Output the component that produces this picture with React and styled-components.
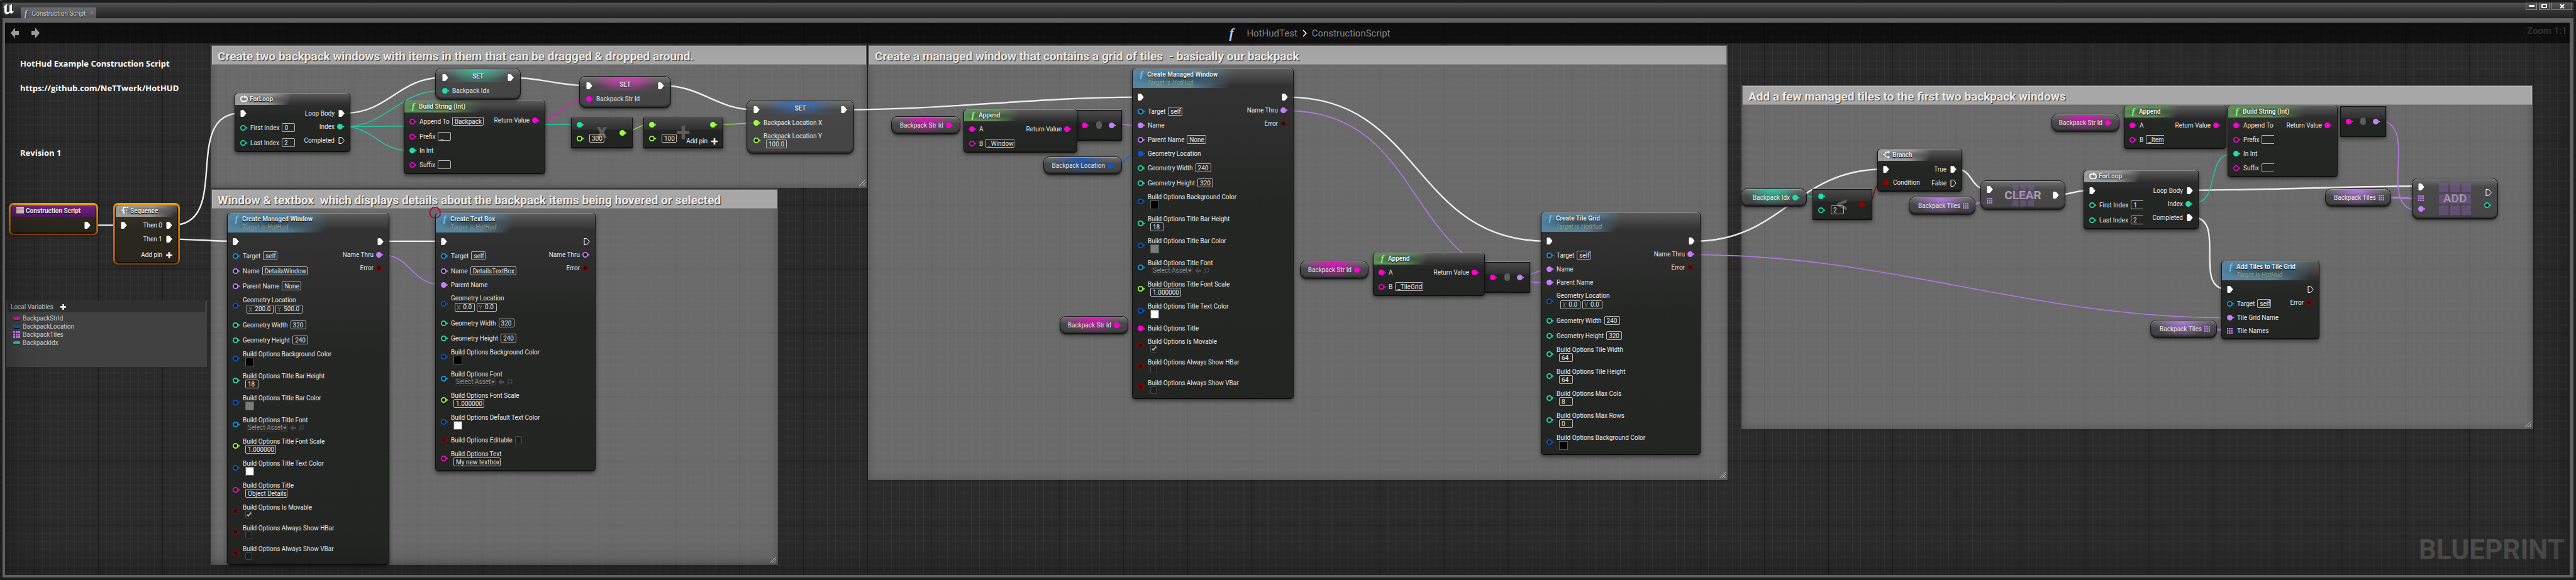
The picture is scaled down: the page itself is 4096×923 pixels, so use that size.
import React, { useId } from "react";
import styled, { createGlobalStyle, css } from "styled-components";

const ZOOM = 0.796;
const PAN = { x: 10, y: 46 };

const C = {
  exec: "#ffffff",
  int: "#22ddac",
  str: "#ff00d4",
  name: "#c67ffb",
  float: "#9bff45",
  struct: "#0757cc",
  obj: "#0aa0e8",
  bool: "#8f0000",
};

const GlobalStyle = createGlobalStyle`
  *, *::before, *::after { box-sizing: border-box; }
  body { margin: 0; background: #1c1d1c; color: #e6e6e6; font: 10px/11px Roboto, sans-serif; }
  input, select, button { font: inherit; color: inherit; margin: 0; }
  h1, h2, h3, p, ul { margin: 0; padding: 0; font: inherit; }
`;

/* ---------- window chrome ---------- */

const Window = styled.div`
  min-height: 100vh;
  display: flex;
  flex-direction: column;
  padding: 0 4px 4px;
  background: linear-gradient(#4a4d4b 0 1px, #1c1e1d 1px);
`;

const TitleBar = styled.header`
  height: 29px;
  padding-top: 4px;
  display: flex;
  align-items: flex-start;
  justify-content: space-between;
  background: linear-gradient(#1c1e1d 0 4px, #525252 5px, #3a3a3a 14px, #222 29px);
`;

const TitleLeft = styled.div`
  display: flex;
  align-items: flex-end;
  height: 25px;
  gap: 10px;
`;

const Logo = styled.svg`
  width: 18px;
  height: 17px;
  margin: 0 0 6px 1px;
`;

const Tab = styled.div`
  display: flex;
  align-items: center;
  gap: 7px;
  width: 120px;
  height: 17px;
  padding-left: 6px;
  border-top: 1px solid #a08a2c;
  border-radius: 2px 2px 0 0;
  background: linear-gradient(#6b6b6b, #565656);
  color: #d2d2d2;
  text-shadow: 1px 1px 0 #222;
  white-space: nowrap;
`;

const TabClose = styled.button`
  border: 0;
  padding: 0;
  background: none;
  color: #8c8c8c;
  line-height: 10px;
`;

const Controls = styled.div`
  display: flex;
  gap: 3px;
  padding-right: 2px;
`;

const ControlButton = styled.button`
  display: flex;
  align-items: center;
  justify-content: center;
  width: ${(p) => p.$w}px;
  height: 12px;
  padding: 0;
  border: 1px solid #8e8e8e;
  border-top: 0;
  background: linear-gradient(#5c5c5c, #3c3c3c);
`;

const Frame = styled.main`
  flex: 1;
  display: flex;
  padding: 7px 6px 4px 4px;
  background: #616161;
`;

const Canvas = styled.div`
  position: relative;
  flex: 1;
  min-height: 870px;
  overflow: hidden;
  background: #2a2a2a;
`;

const Layer = styled.svg`
  position: absolute;
  inset: 0;
  width: 100%;
  height: 100%;
  pointer-events: none;
`;

const Vignette = styled.div`
  position: absolute;
  inset: 0;
  box-shadow: inset 0 0 60px rgba(0, 0, 0, 0.4);
  pointer-events: none;
`;

const Toolbar = styled.nav`
  position: relative;
  display: flex;
  align-items: center;
  justify-content: space-between;
  height: 33px;
  padding: 0 4px 0 9px;
  background: rgba(0, 0, 0, 0.6);
`;

const NavButtons = styled.div`
  display: flex;
  gap: 20px;
`;

const NavButton = styled.button`
  display: flex;
  padding: 0;
  border: 0;
  background: none;
  color: #9a9a9a;
`;

const Breadcrumb = styled.div`
  display: flex;
  align-items: center;
  gap: 8px;
  margin-left: 84px;
  font-size: 15px;
  line-height: 18px;
  color: #868686;
`;

const Crumb = styled.a`
  color: inherit;
  text-decoration: none;
`;

const CrumbIcon = styled.span`
  display: flex;
  width: 20px;
`;

const ZoomLevel = styled.span`
  align-self: flex-start;
  padding-top: 4px;
  font-size: 15px;
  line-height: 18px;
  font-weight: 700;
  color: #303030;
`;

const Watermark = styled.div`
  position: absolute;
  right: 8px;
  bottom: 16px;
  font-size: 44px;
  line-height: 48px;
  font-weight: 700;
  color: rgba(255, 255, 255, 0.17);
`;

/* ---------- canvas items ---------- */

const placed = css`
  position: absolute;
  left: ${(p) => Math.round((p.$x - PAN.x) * ZOOM)}px;
  top: ${(p) => Math.round((p.$y - PAN.y) * ZOOM)}px;
`;

const Note = styled.p`
  ${placed}
  font: 700 13px/16px "Open Sans", sans-serif;
  color: #fff;
  white-space: nowrap;
`;

const CommentBox = styled.section`
  ${placed}
  width: ${(p) => Math.round(p.$w * ZOOM)}px;
  height: ${(p) => Math.round(p.$h * ZOOM)}px;
  padding: 2px;
  background: rgba(184, 184, 184, 0.45);
  box-shadow: inset 0 0 14px rgba(0, 0, 0, 0.28), 0 0 3px rgba(0, 0, 0, 0.4);
`;

const CommentTitle = styled.h2`
  height: 30px;
  padding: 4px 8px 0;
  overflow: hidden;
  border: 1px solid #b4b4b4;
  border-bottom-color: #8a8a8a;
  background: #a7a7a7;
  color: #ececec;
  font-size: 19px;
  line-height: 23px;
  font-weight: 700;
  white-space: pre;
  text-shadow: 1px 1px 1px #2a2a2a;
`;

const Grip = styled.svg`
  position: absolute;
  right: 3px;
  bottom: 3px;
  width: 10px;
  height: 10px;
`;

const nodeFrame = css`
  border-radius: 5px;
  background: linear-gradient(rgba(48, 48, 48, 0.93), rgba(32, 34, 32, 0.94) 40%, rgba(31, 33, 31, 0.95));
  box-shadow: 0 0 0 1px #111 inset, 0 1px 1px #0a0a0a, 0 4px 6px rgba(0, 0, 0, 0.5);
`;

const NodeBox = styled.article`
  ${(p) => (p.$x === undefined ? "position: relative;" : placed)}
  ${nodeFrame}
  width: ${(p) => p.$w}px;
`;

const Selected = styled.div`
  ${placed}
  padding: 3px;
  border-radius: 8px;
  background: linear-gradient(#f3a70c, #d46a04);
`;

const NodeHeader = styled.header`
  height: ${(p) => (p.$tall ? 31 : 19)}px;
  margin: 0 1px;
  border-radius: 5px 5px 0 0;
  border-top: 1px solid #8c8c8c;
  background: linear-gradient(#5a5a5a, #303030 90%);
  display: flex;
  overflow: hidden;
`;

const HeaderSpill = styled.div`
  display: flex;
  align-items: flex-start;
  gap: 3px;
  height: 100%;
  padding: 2px 34px 0 8px;
  background:
    radial-gradient(ellipse at 45% 50%, rgba(20, 24, 28, 0.55), transparent 60%),
    linear-gradient(105deg, ${(p) => p.$tint} 55%, transparent 92%);
  ${(p) => p.$full && `flex: 1; background: linear-gradient(rgba(0,0,0,.05), rgba(0,0,0,.35)), ${p.$tint};`}
`;

const HeaderIcon = styled.span`
  display: flex;
  justify-content: center;
  width: 12px;
  color: #fff;
`;

const Fx = styled.i`
  font: italic 700 ${(p) => p.$size || 14}px/13px "Liberation Serif", serif;
  color: ${(p) => p.$color};
`;

const NodeTitle = styled.h3`
  font-size: 10px;
  line-height: 13px;
  font-weight: 700;
  color: #ececec;
  white-space: nowrap;
  text-shadow: 0 1px 1px #000;
`;

const NodeSubtitle = styled.p`
  font-style: italic;
  line-height: 13px;
  color: #8f9a78;
`;

const NodeBody = styled.div`
  display: flex;
  justify-content: space-between;
  padding: ${(p) => p.$top}px ${(p) => p.$side || 9}px 7px;
`;

const PinColumn = styled.div`
  display: flex;
  flex-direction: column;
  gap: 10px;
  align-items: ${(p) => (p.$right ? "flex-end" : "flex-start")};
`;

const PinRow = styled.div`
  display: flex;
  align-items: center;
  gap: 4px;
  min-height: ${(p) => (p.$exec ? 12 : 11)}px;
  flex-direction: ${(p) => (p.$right ? "row-reverse" : "row")};
  white-space: nowrap;
`;

const PinSlot = styled.span`
  display: flex;
  width: 12px;
  justify-content: ${(p) => (p.$right ? "flex-end" : "flex-start")};
`;

const PinContent = styled.div`
  display: flex;
  gap: ${(p) => (p.$stack ? 0 : 4)}px;
  flex-direction: ${(p) => (p.$stack ? "column" : "row")};
  align-items: ${(p) => (p.$stack ? "flex-start" : "center")};
`;

const FieldSlot = styled.div`
  display: flex;
  gap: 3px;
  padding-left: ${(p) => (p.$stack ? 4 : 0)}px;
`;

const TextField = styled.input`
  width: ${(p) => p.$w}px;
  height: 14px;
  padding: 0 0 0 3px;
  border: 1px solid #b8b8b8;
  ${(p) => p.$cut && "border-right: 0;"}
  border-radius: ${(p) => (p.$cut ? "2px 0 0 2px" : "2px")};
  background: transparent;
  color: #e6e6e6;
  line-height: 12px;
`;

const VectorSlot = styled.div`
  display: flex;
  gap: 3px;
  padding: 2px 0 1px 6px;
`;

const VectorField = styled.label`
  display: flex;
  align-items: center;
  width: ${(p) => p.$w}px;
  height: 14px;
  padding-left: 2px;
  gap: 4px;
  border: 1px solid #b8b8b8;
  border-radius: 2px;
  color: #777;
`;

const VectorInput = styled.input`
  flex: 1;
  min-width: 0;
  width: 10px;
  padding: 0;
  border: 0;
  background: none;
  color: #e6e6e6;
  line-height: 12px;
`;

const Swatch = styled.button`
  width: 14px;
  height: 14px;
  padding: 0;
  border: 1px solid #5c5c5c;
  background: ${(p) => p.$color};
`;

const AssetSlot = styled.div`
  padding-left: 6px;
`;

const AssetWrap = styled.div`
  position: relative;
  display: flex;
  align-items: center;
  gap: 3px;
  height: 13px;
  color: #4a4a4a;
`;

const AssetSelect = styled.select`
  appearance: none;
  width: 66px;
  height: 13px;
  padding: 0 2px;
  border: 0;
  border-radius: 2px;
  background: #2f302f;
  color: #939393;
  line-height: 12px;
  text-shadow: 0 1px 1px #000;
`;

const Caret = styled.svg`
  position: absolute;
  left: 58px;
  top: 5px;
  width: 6px;
  height: 4px;
`;

const Check = styled.input`
  appearance: none;
  position: relative;
  width: 11px;
  height: ${(p) => (p.$tall ? 13 : 12)}px;
  border: 1px solid #4b4b4b;
  border-radius: 2px;
  background: #1d1f1d;
  &:checked::after {
    content: "";
    position: absolute;
    left: 3px;
    top: 0;
    width: 4px;
    height: 8px;
    border: solid #b5b5b5;
    border-width: 0 2px 2px 0;
    transform: rotate(40deg);
  }
`;

const AddPinButton = styled.button`
  display: flex;
  align-items: center;
  gap: 6px;
  height: 11px;
  margin-top: ${(p) => p.$push}px;
  padding: 0;
  border: 0;
  background: none;
  color: #f0f0f0;
  line-height: 11px;
  white-space: nowrap;
`;

/* ---------- rounded nodes ---------- */

const glassFrame = css`
  border-radius: 9px;
  border-top: 1px solid #9c9c9c;
  box-shadow: 0 0 0 1px #151515, 0 2px 2px #101010, 0 4px 6px rgba(0, 0, 0, 0.5),
    inset 0 -2px 2px rgba(0, 0, 0, 0.35);
`;

const SetBox = styled.article`
  ${placed}
  ${glassFrame}
  width: ${(p) => p.$w}px;
  background:
    radial-gradient(ellipse 50px 22px at 50% 0, ${(p) => p.$tint}, transparent),
    linear-gradient(90deg, transparent 10%, ${(p) => p.$tint}33 35%, ${(p) => p.$tint}33 65%, transparent 90%) 0 0 / 100% 21px no-repeat,
    linear-gradient(rgba(115, 115, 115, 0.85), rgba(68, 68, 68, 0.92) 14px, rgba(66, 66, 66, 0.92) 60%);
`;

const SetHead = styled.header`
  display: flex;
  align-items: flex-start;
  justify-content: space-between;
  height: 27px;
  padding: 5px 10px 0;
  > svg { margin-top: 3px; }
`;

const Pill = styled.article`
  ${placed}
  ${glassFrame}
  display: flex;
  align-items: center;
  justify-content: flex-end;
  gap: 4px;
  width: ${(p) => p.$w}px;
  height: 26px;
  padding-right: 10px;
  background:
    radial-gradient(ellipse 45px 26px at 48% 0, ${(p) => p.$tint}cc, transparent),
    linear-gradient(rgba(110, 110, 110, 0.9), rgba(70, 70, 70, 0.92) 40%, rgba(60, 60, 60, 0.92));
  white-space: nowrap;
`;

const ArrayFnBox = styled.article`
  ${placed}
  ${glassFrame}
  display: flex;
  justify-content: space-between;
  width: ${(p) => p.$w}px;
  height: ${(p) => p.$h}px;
  padding: 0 9px;
  background: linear-gradient(rgba(110, 110, 110, 0.9), rgba(72, 72, 72, 0.92) 12px, rgba(66, 66, 66, 0.92));
`;

const ArrayFnPins = styled.div`
  display: flex;
  flex-direction: column;
  gap: ${(p) => (p.$right ? 10 : 8)}px;
  justify-content: ${(p) => (p.$right ? "center" : "flex-start")};
  align-items: ${(p) => (p.$right ? "flex-end" : "flex-start")};
  padding-top: ${(p) => (p.$right ? 0 : 7)}px;
`;

const ArrayFnLabel = styled.div`
  position: absolute;
  inset: 0;
  display: grid;
  place-items: center;
  color: #a9a3ae;
  font-size: 19px;
  line-height: 22px;
  font-weight: 700;
  > * { grid-area: 1 / 1; }
`;

const MathBox = styled.article`
  ${placed}
  ${nodeFrame}
  display: flex;
  justify-content: space-between;
  border-radius: 1px;
  border-top: 1px solid #8a8a8a;
  width: ${(p) => p.$w}px;
  height: 49px;
  padding: 0 9px;
  background: linear-gradient(rgba(72, 72, 72, 0.95), rgba(44, 44, 44, 0.95) 19px, rgba(32, 34, 32, 0.96) 20px);
`;

const MathGlyph = styled.span`
  position: absolute;
  inset: 0;
  display: grid;
  place-items: center;
  padding-bottom: ${(p) => (p.$raised ? 6 : 0)}px;
  color: #5c5d5c;
  font-size: ${(p) => p.$size}px;
  line-height: 40px;
  font-weight: 700;
`;

const MathPins = styled.div`
  position: relative;
  display: flex;
  flex-direction: column;
  gap: 9px;
  padding-top: ${(p) => (p.$mid ? 0 : 6)}px;
  justify-content: ${(p) => (p.$mid ? "center" : "flex-start")};
  align-items: ${(p) => (p.$right ? "flex-end" : "flex-start")};
`;

const MathRow = styled.div`
  display: flex;
  align-items: center;
  gap: 8px;
  min-height: 11px;
`;

const ConvertBox = styled(MathBox)`
  align-items: center;
`;

const Dot = styled.span`
  width: 9px;
  height: 12px;
  border-radius: 5px;
  background: #5b5c5b;
`;

/* ---------- local variables ---------- */

const Variables = styled.aside`
  ${placed}
  width: 319px;
  height: 105px;
  padding: 0 3px 0 2px;
  background: #414141;
`;

const VariablesHead = styled.div`
  display: flex;
  align-items: center;
  gap: 11px;
  height: 18px;
  padding-left: 5px;
  margin-bottom: 3px;
  background: #303030;
  color: #c4c4c4;
`;

const VariableItem = styled.li`
  display: flex;
  align-items: center;
  gap: 4px;
  height: 13px;
  padding-left: 9px;
  list-style: none;
  color: #c8c8c8;
`;

const Bar = styled.span`
  width: 11px;
  height: 5px;
  border-radius: 2px;
  background: ${(p) => p.$color};
  box-shadow: 0 1px 0 #111;
`;

const IconButton = styled.button`
  display: flex;
  padding: 0;
  border: 0;
  background: none;
  color: #fff;
`;

/* ---------- glyphs ---------- */

const Exec = ({ open }) => (
  <svg width="10" height="11" viewBox="0 0 10 11" aria-hidden="true">
    <path d="M1 .5H4.6Q5.2 .5 5.6 1L9.2 5.5L5.6 10Q5.2 10.5 4.6 10.5H1Z" fill={open ? "none" : "#fff"} stroke="#fff" strokeWidth="1" />
  </svg>
);

const Data = ({ color, filled }) => (
  <svg width="12" height="9" viewBox="0 0 12 9" aria-hidden="true">
    <circle cx="4.5" cy="4.5" r="3.6" fill={filled ? color : "#141614"} stroke={color} strokeWidth="1.7" />
    <path d="M9.2 2.4L11.6 4.5L9.2 6.6Z" fill={color} />
  </svg>
);

const ArrayIcon = ({ size = 9, color = C.name, opacity = 1, gap = 1 }) => {
  const cell = (size - gap * 2) / 3;
  return (
    <svg width={size} height={size} opacity={opacity} aria-hidden="true">
      {[0, 1, 2].map((r) =>
        [0, 1, 2].map((c) => (
          <rect key={`${r}${c}`} x={c * (cell + gap)} y={r * (cell + gap)} width={cell} height={cell} fill={color} />
        ))
      )}
    </svg>
  );
};

const Plus = ({ size = 9 }) => (
  <svg width={size} height={size} viewBox="0 0 9 9" aria-hidden="true">
    <path d="M3.3 0H5.7V3.3H9V5.7H5.7V9H3.3V5.7H0V3.3H3.3Z" fill="currentColor" />
  </svg>
);

const ArrowGlyph = ({ flip, w = 13, h = 17 }) => (
  <svg width={w} height={h} viewBox="0 0 13 17" aria-hidden="true" preserveAspectRatio="none">
    <path d={flip ? "M13 8.5L6 0V5H0V12H6V17Z" : "M0 8.5L7 0V5H13V12H7V17Z"} fill="currentColor" />
  </svg>
);

const LoopIcon = () => (
  <svg width="12" height="12" viewBox="0 0 12 12" fill="none" stroke="#fff" strokeWidth="1.8" aria-hidden="true">
    <path d="M4 3H3.2Q1 3.3 1 6.4Q1 10 4 10H8Q11 10 11 6.4Q11 3.3 8.6 3H6" />
    <path d="M7.6 0L4.6 3L7.6 6Z" fill="#fff" stroke="none" />
  </svg>
);

const BranchIcon = () => (
  <svg width="12" height="12" viewBox="0 0 12 12" fill="none" stroke="#fff" strokeWidth="1.3" aria-hidden="true">
    <path d="M0 6H3M9 2H7Q3 2 3 6Q3 10 7 10H9" />
    <path d="M8 0L11 2L8 4ZM8 8L11 10L8 12Z" fill="#fff" stroke="none" />
  </svg>
);

const SequenceIcon = () => (
  <svg width="12" height="11" viewBox="0 0 12 11" fill="none" stroke="#fff" strokeWidth="1.6" aria-hidden="true">
    <path d="M0 5.5H4M8 1.2H4V9.8H7M4 5.5H7M9.5 1.2H12M8.5 5.5H10.5M8.5 9.8H9.5" />
  </svg>
);

const EventIcon = () => (
  <svg width="13" height="11" viewBox="0 0 13 11" aria-hidden="true">
    <rect width="13" height="3" fill="#e9e2d0" />
    <rect y="4" width="13" height="7" fill="#cfc8b6" />
  </svg>
);

const Magnifier = () => (
  <svg width="10" height="10" viewBox="0 0 10 10" fill="none" stroke="currentColor" strokeWidth="1.3" aria-hidden="true">
    <circle cx="6" cy="4" r="3.2" />
    <path d="M3.6 6.4L.6 9.6" />
  </svg>
);

/* ---------- composed parts ---------- */

const Icon = ({ p }) => {
  if (p.k === "exec") return <Exec open={p.open} />;
  if (p.k === "array") return <ArrayIcon />;
  return <Data color={p.c} filled={p.f} />;
};

function Field({ field, id, name, stack }) {
  if (field.t === "vec") {
    return (
      <VectorSlot>
        <VectorField $w={field.w}>
          X<VectorInput defaultValue={field.x} />
        </VectorField>
        <VectorField $w={field.w}>
          Y<VectorInput defaultValue={field.y} />
        </VectorField>
      </VectorSlot>
    );
  }
  if (field.t === "asset") {
    return (
      <AssetSlot>
        <AssetWrap>
          <AssetSelect id={id} defaultValue="0">
            <option value="0">Select Asset</option>
          </AssetSelect>
          <Caret viewBox="0 0 7 4" aria-hidden="true">
            <path d="M0 0H7L3.5 4Z" fill="#939393" />
          </Caret>
          <ArrowGlyph w={10} h={10} />
          <Magnifier />
        </AssetWrap>
      </AssetSlot>
    );
  }
  return (
    <FieldSlot $stack={stack}>
      {field.t === "color" && <Swatch id={id} type="button" aria-label={name} $color={field.v} />}
      {field.t === "check" && <Check id={id} type="checkbox" defaultChecked={field.v} $tall={!stack} />}
      {field.t === "text" && <TextField id={id} defaultValue={field.v} $w={field.w} $cut={field.cut} />}
    </FieldSlot>
  );
}

function Pin({ p, right }) {
  const id = useId();
  return (
    <PinRow $right={right} $exec={p.k === "exec"}>
      <PinSlot $right={right}>
        <Icon p={p} />
      </PinSlot>
      {p.label && (
        <PinContent $stack={p.stack}>
          {p.field && p.field.t !== "vec" ? <label htmlFor={id}>{p.label}</label> : <span>{p.label}</span>}
          {p.field && <Field field={p.field} id={id} name={p.label} stack={p.stack} />}
        </PinContent>
      )}
    </PinRow>
  );
}

const TINT = { blue: "#54849f", green: "#5f8d58", grey: "#9c9c9c", purple: "#7a2390" };

function Node({ x, y, w, title, sub, tint, icon, left = [], right = [], addPin, full }) {
  return (
    <NodeBox $x={x} $y={y} $w={w}>
      <NodeHeader $tall={!!sub}>
        <HeaderSpill $tint={TINT[tint]} $full={full}>
          <HeaderIcon>
            {icon || <Fx $color={tint === "green" ? "#9aec86" : "#6cc0ff"}>f</Fx>}
          </HeaderIcon>
          <div>
            <NodeTitle>{title}</NodeTitle>
            {sub && <NodeSubtitle>{sub}</NodeSubtitle>}
          </div>
        </HeaderSpill>
      </NodeHeader>
      <NodeBody $top={sub ? 8 : 7}>
        <PinColumn>
          {left.map((p, i) => (
            <Pin key={i} p={p} />
          ))}
        </PinColumn>
        <PinColumn $right>
          {right.map((p, i) => (
            <Pin key={i} p={p} right />
          ))}
          {addPin && (
            <AddPinButton type="button" $push={4}>
              Add pin <Plus size={10} />
            </AddPinButton>
          )}
        </PinColumn>
      </NodeBody>
    </NodeBox>
  );
}

function SetNode({ x, y, w, tint, rows }) {
  return (
    <SetBox $x={x} $y={y} $w={w} $tint={tint}>
      <SetHead>
        <Exec />
        <NodeTitle>SET</NodeTitle>
        <Exec />
      </SetHead>
      <NodeBody $top={2} $side={10}>
        <PinColumn>
          {rows.map((p, i) => (
            <Pin key={i} p={p} />
          ))}
        </PinColumn>
      </NodeBody>
    </SetBox>
  );
}

const Variable = ({ x, y, w, name, color, array }) => (
  <Pill $x={x} $y={y} $w={w} $tint={color}>
    <span>{name}</span>
    {array ? <ArrayIcon /> : <Data color={color} filled />}
  </Pill>
);

const Convert = ({ x, y }) => (
  <ConvertBox $x={x} $y={y} $w={73}>
    <Data color={C.str} filled />
    <Dot />
    <Data color={C.name} filled />
  </ConvertBox>
);

const Comment = ({ x, y, w, h, children }) => (
  <CommentBox $x={x} $y={y} $w={w} $h={h}>
    <CommentTitle>{children}</CommentTitle>
    <Grip viewBox="0 0 10 10" aria-hidden="true">
      <path d="M0 10L10 0M4 10L10 4M7.5 10L10 7.5" stroke="#c8c8c8" strokeWidth="1" />
    </Grip>
  </CommentBox>
);

/* ---------- graph data ---------- */

const exec = (label, open) => ({ k: "exec", label, open });
const pin = (label, c, f, field, stack) => ({ label, c, f, field, stack });
const text = (v, w, cut) => ({ t: "text", v, w, cut });
const opt = (label, c, field) => pin(`Build Options ${label}`, c, false, field, true);
const color = (v) => ({ t: "color", v });
const check = (v) => ({ t: "check", v });
const vec = (x, y, w) => ({ t: "vec", x, y, w });

const managedOptions = (titlePin) => [
  opt("Background Color", C.struct, color("#000")),
  opt("Title Bar Height", C.int, text("18", 21)),
  opt("Title Bar Color", C.struct, color("#7b7b7b")),
  opt("Title Font", C.obj, { t: "asset" }),
  opt("Title Font Scale", C.float, text("1.000000", 49)),
  opt("Title Text Color", C.struct, color("#fff")),
  titlePin,
  opt("Is Movable", C.bool, check(true)),
  opt("Always Show HBar", C.bool, check(false)),
  opt("Always Show VBar", C.bool, check(false)),
];

const outs = (thru, execOpen) => [exec(null, execOpen), pin("Name Thru", C.name, thru), pin("Error", C.bool)];

const NODES = [
  {
    x: 469, y: 187, w: 184, title: "ForLoop", tint: "grey", icon: <LoopIcon />,
    left: [exec(), pin("First Index", C.int, false, text("0", 21)), pin("Last Index", C.int, false, text("2", 21))],
    right: [exec("Loop Body"), pin("Index", C.int, true), exec("Completed", true)],
  },
  {
    x: 806, y: 202, w: 225, title: "Build String (Int)", tint: "green",
    left: [
      pin("Append To", C.str, false, text("Backpack", 50)),
      pin("Prefix", C.str, false, text("_", 21)),
      pin("In Int", C.int, true),
      pin("Suffix", C.str, false, text("", 21)),
    ],
    right: [pin("Return Value", C.str, true)],
  },
  {
    x: 453, y: 427, w: 258, title: "Create Managed Window", sub: "Target is HotHud", tint: "blue",
    left: [
      exec(),
      pin("Target", C.obj, false, text("self", 23)),
      pin("Name", C.name, false, text("DetailsWindow", 72)),
      pin("Parent Name", C.name, false, text("None", 31)),
      pin("Geometry Location", C.struct, false, vec("200.0", "500.0", 43), true),
      pin("Geometry Width", C.int, false, text("320", 25)),
      pin("Geometry Height", C.int, false, text("240", 25)),
      ...managedOptions(opt("Title", C.str, text("Object Details", 67))),
    ],
    right: outs(true),
  },
  {
    x: 869, y: 427, w: 255, title: "Create Text Box", sub: "Target is HotHud", tint: "blue",
    left: [
      exec(),
      pin("Target", C.obj, false, text("self", 23)),
      pin("Name", C.name, false, text("DetailsTextBox", 73)),
      pin("Parent Name", C.name, true),
      pin("Geometry Location", C.struct, false, vec("0.0", "0.0", 32), true),
      pin("Geometry Width", C.int, false, text("320", 25)),
      pin("Geometry Height", C.int, false, text("240", 25)),
      opt("Background Color", C.struct, color("#000")),
      opt("Font", C.obj, { t: "asset" }),
      opt("Font Scale", C.float, text("1.000000", 49)),
      opt("Default Text Color", C.struct, color("#fff")),
      pin("Build Options Editable", C.bool, false, check(false)),
      opt("Text", C.str, text("My new textbox", 75)),
    ],
    right: outs(false, true),
  },
  {
    x: 1925, y: 219, w: 181, title: "Append", tint: "green",
    left: [pin("A", C.str, true), pin("B", C.str, false, text("_Window", 46))],
    right: [pin("Return Value", C.str, true)],
  },
  {
    x: 2261, y: 138, w: 257, title: "Create Managed Window", sub: "Target is HotHud", tint: "blue",
    left: [
      exec(),
      pin("Target", C.obj, false, text("self", 23)),
      pin("Name", C.name, true),
      pin("Parent Name", C.name, false, text("None", 31)),
      pin("Geometry Location", C.struct, true),
      pin("Geometry Width", C.int, false, text("240", 25)),
      pin("Geometry Height", C.int, false, text("320", 25)),
      ...managedOptions(pin("Build Options Title", C.str, true)),
    ],
    right: outs(true),
  },
  {
    x: 2742, y: 506, w: 178, title: "Append", tint: "green",
    left: [pin("A", C.str, true), pin("B", C.str, false, text("_TileGrid", 45))],
    right: [pin("Return Value", C.str, true)],
  },
  {
    x: 3078, y: 426, w: 254, title: "Create Tile Grid", sub: "Target is HotHud", tint: "blue",
    left: [
      exec(),
      pin("Target", C.obj, false, text("self", 23)),
      pin("Name", C.name, true),
      pin("Parent Name", C.name, true),
      pin("Geometry Location", C.struct, false, vec("0.0", "0.0", 32), true),
      pin("Geometry Width", C.int, false, text("240", 25)),
      pin("Geometry Height", C.int, false, text("320", 25)),
      opt("Tile Width", C.int, text("64", 22)),
      opt("Tile Height", C.int, text("64", 22)),
      opt("Max Cols", C.int, text("8", 22)),
      opt("Max Rows", C.int, text("0", 22)),
      opt("Background Color", C.struct, color("#000")),
    ],
    right: outs(true),
  },
  {
    x: 3750, y: 298, w: 135, title: "Branch", tint: "grey", icon: <BranchIcon />,
    left: [exec(), pin("Condition", C.bool, true)],
    right: [exec("True"), exec("False", true)],
  },
  {
    x: 4162, y: 341, w: 183, title: "ForLoop", tint: "grey", icon: <LoopIcon />,
    left: [
      exec(),
      pin("First Index", C.int, false, text("1", 20, true)),
      pin("Last Index", C.int, false, text("2", 20, true)),
    ],
    right: [exec("Loop Body"), pin("Index", C.int, true), exec("Completed")],
  },
  {
    x: 4243, y: 212, w: 163, title: "Append", tint: "green",
    left: [pin("A", C.str, true), pin("B", C.str, false, text("_Item", 29, true))],
    right: [pin("Return Value", C.str, true)],
  },
  {
    x: 4450, y: 212, w: 175, title: "Build String (Int)", tint: "green",
    left: [
      pin("Append To", C.str, true),
      pin("Prefix", C.str, false, text("", 20, true)),
      pin("In Int", C.int, true),
      pin("Suffix", C.str, false, text("", 20, true)),
    ],
    right: [pin("Return Value", C.str, true)],
  },
  {
    x: 4437, y: 522, w: 156, title: "Add Tiles to Tile Grid", sub: "Target is HotHud", tint: "blue",
    left: [
      exec(),
      pin("Target", C.obj, false, text("self", 22)),
      pin("Tile Grid Name", C.name, true),
      { k: "array", label: "Tile Names" },
    ],
    right: [exec(null, true), pin("Error", C.bool)],
  },
];

const VARIABLES = [
  { x: 1781, y: 235, w: 108, name: "Backpack Str Id", color: C.str },
  { x: 2085, y: 315, w: 123, name: "Backpack Location", color: C.struct },
  { x: 2118, y: 634, w: 107, name: "Backpack Str Id", color: C.str },
  { x: 2598, y: 523, w: 107, name: "Backpack Str Id", color: C.str },
  { x: 4099, y: 229, w: 106, name: "Backpack Str Id", color: C.str },
  { x: 3478, y: 379, w: 103, name: "Backpack Idx", color: C.int },
  { x: 3814, y: 395, w: 104, name: "Backpack Tiles", color: C.name, array: true },
  { x: 4646, y: 379, w: 103, name: "Backpack Tiles", color: C.name, array: true },
  { x: 4297, y: 641, w: 104, name: "Backpack Tiles", color: C.name, array: true },
];

const W = {
  exec: { stroke: "#ededed", width: 3 },
  int: { stroke: "#26c79c", width: 2 },
  str: { stroke: "#e01ac0", width: 2 },
  name: { stroke: "#b377e2", width: 2 },
  array: { stroke: "#b377e2", width: 4 },
  float: { stroke: "#8fdc44", width: 2 },
  struct: { stroke: "#1460c8", width: 2 },
  bool: { stroke: "#8c1010", width: 2 },
};

const WIRES = [
  ["exec", 182, 451, 241, 451],
  ["exec", 344, 451, 481, 227],
  ["exec", 344, 479, 466, 483],
  ["exec", 688, 227, 884, 156],
  ["exec", 1023, 156, 1172, 172],
  ["exec", 1324, 172, 1508, 220],
  ["exec", 1691, 220, 2273, 195],
  ["exec", 2572, 195, 3090, 483],
  ["exec", 3385, 483, 3762, 339],
  ["exec", 3908, 339, 3969, 379],
  ["exec", 4111, 390, 4174, 381],
  ["exec", 4379, 381, 4830, 373],
  ["exec", 4379, 435, 4449, 579],
  ["exec", 765, 483, 882, 483],
  ["int", 686, 254, 883, 182],
  ["int", 686, 254, 817, 302],
  ["int", 686, 254, 1153, 249],
  ["int", 3591, 395, 3634, 393],
  ["int", 4378, 408, 4462, 308],
  ["str", 1072, 242, 1171, 199],
  ["str", 1898, 251, 1937, 257],
  ["str", 2715, 539, 2754, 546],
  ["str", 4216, 245, 4256, 252],
  ["str", 2234, 651, 2274, 656],
  ["str", 2136, 257, 2162, 249],
  ["str", 2950, 546, 2978, 553],
  ["str", 4434, 252, 4462, 252],
  ["str", 4655, 252, 4687, 242],
  ["name", 761, 510, 882, 570],
  ["name", 2226, 249, 2274, 252],
  ["name", 2570, 222, 3090, 566],
  ["name", 3041, 553, 3090, 540],
  ["name", 3381, 510, 4449, 636],
  ["name", 4751, 242, 4830, 421],
  ["array", 3931, 411, 3969, 404],
  ["array", 4764, 395, 4830, 398],
  ["array", 4411, 657, 4449, 662],
  ["float", 1248, 264, 1298, 249],
  ["float", 1429, 250, 1508, 247],
  ["struct", 2223, 331, 2274, 308],
  ["bool", 3725, 408, 3762, 366],
];

const wirePath = ([, x1, y1, x2, y2]) => {
  const reach = (Math.abs(x2 - x1) + Math.abs(y2 - y1)) / 3;
  return `M${x1} ${y1}C${x1 + reach} ${y1} ${x2 - reach} ${y2} ${x2} ${y2}`;
};

const view = `scale(${ZOOM}) translate(${-PAN.x} ${-PAN.y})`;

const Grid = () => (
  <Layer aria-hidden="true">
    <defs>
      <pattern id="minor" width="16" height="16" patternUnits="userSpaceOnUse" patternTransform={`${view} translate(68 154)`}>
        <path d="M0 .5H16M.5 0V16" stroke="#363636" strokeWidth="1.2" />
      </pattern>
      <pattern id="major" width="128" height="128" patternUnits="userSpaceOnUse" patternTransform={`${view} translate(68 154)`}>
        <path d="M0 .5H128M.5 0V128" stroke="#171717" strokeWidth="1.3" />
      </pattern>
    </defs>
    <rect width="100%" height="100%" fill="url(#minor)" />
    <rect width="100%" height="100%" fill="url(#major)" />
  </Layer>
);

const Wires = () => (
  <Layer aria-hidden="true">
    <g transform={view} fill="none">
      {WIRES.map((w, i) => (
        <path key={i} d={wirePath(w)} stroke={W[w[0]].stroke} strokeWidth={W[w[0]].width} />
      ))}
    </g>
  </Layer>
);

const Marker = () => (
  <Layer aria-hidden="true">
    <g transform={view}>
      <path d="M864 416H874L879 422V431L874 436H864L859 431V422Z" fill="none" stroke="#b00028" strokeWidth="2.2" />
    </g>
  </Layer>
);

export default function App() {
  return (
    <Window>
      <GlobalStyle />
      <TitleBar>
        <TitleLeft>
          <Logo viewBox="0 0 22 20" aria-hidden="true">
            <path d="M0 8Q3 1 9 0Q7 2 7 4V13Q7 16 9 16Q11 16 12.500 14V4L11 3Q15 2 17 0V14Q18 16 21.500 12Q20 18 15 19L13 17Q10 20 7 20Q2 19 2.500 13V6Q1.500 6 0 8Z" fill="#fff" />
          </Logo>
          <Tab>
            <Fx $color="#a9bdf2">f</Fx>
            <span>Construction Script</span>
            <TabClose type="button" aria-label="Close tab">×</TabClose>
          </Tab>
        </TitleLeft>
        <Controls>
          <ControlButton type="button" aria-label="Minimize" $w={18}>
            <svg width="9" height="3"><rect width="9" height="3" fill="#fff" /></svg>
          </ControlButton>
          <ControlButton type="button" aria-label="Maximize" $w={17}>
            <svg width="9" height="7"><rect x="1" y="1" width="7" height="5" fill="none" stroke="#fff" strokeWidth="2" /></svg>
          </ControlButton>
          <ControlButton type="button" aria-label="Close" $w={33}>
            <svg width="8" height="8"><path d="M1 1L7 7M7 1L1 7" stroke="#fff" strokeWidth="2" /></svg>
          </ControlButton>
        </Controls>
      </TitleBar>

      <Frame>
        <Canvas>
          <Grid />

          <Comment x={421} y={90} w={1312} h={287}>
            Create two backpack windows with items in them that can be dragged &amp; dropped around.
          </Comment>
          <Comment x={421} y={378} w={1133} h={752}>
            {"Window & textbox  which displays details about the backpack items being hovered or selected"}
          </Comment>
          <Comment x={1733} y={90} w={1717} h={871}>
            {"Create a managed window that contains a grid of tiles  - basically our backpack"}
          </Comment>
          <Comment x={3478} y={170} w={1582} h={689}>
            Add a few managed tiles to the first two backpack windows
          </Comment>

          <Wires />

          <Note $x={40} $y={117}>HotHud Example Construction Script</Note>
          <Note $x={40} $y={167}>https://github.com/NeTTwerk/HotHUD</Note>
          <Note $x={40} $y={296}>Revision 1</Note>

          <Selected $x={18} $y={407}>
            <Node w={136} title="Construction Script" tint="purple" full icon={<EventIcon />} right={[exec()]} />
          </Selected>
          <Selected $x={226} $y={407}>
            <Node
              w={100}
              title="Sequence"
              tint="grey"
              icon={<SequenceIcon />}
              left={[exec()]}
              right={[exec("Then 0"), exec("Then 1")]}
              addPin
            />
          </Selected>

          <Convert x={2150} y={219} />
          <Convert x={2965} y={523} />
          <Convert x={4674} y={212} />

          {NODES.map((n, i) => (
            <Node key={i} {...n} />
          ))}

          <SetNode x={870} y={138} w={134} tint="#3fb594" rows={[pin("Backpack Idx", C.int, true)]} />
          <SetNode x={1158} y={154} w={144} tint="#d43ab8" rows={[pin("Backpack Str Id", C.str, true)]} />
          <SetNode
            x={1493}
            y={202}
            w={169}
            tint="#2f6fc4"
            rows={[pin("Backpack Location X", C.float, true), pin("Backpack Location Y", C.float, false, text("100.0", 33), true)]}
          />

          <MathBox $x={1141} $y={234} $w={98}>
            <MathGlyph $size={34} $raised>x</MathGlyph>
            <MathPins>
              <MathRow><Data color={C.int} filled /></MathRow>
              <MathRow><Data color={C.float} /><TextField aria-label="Multiplier" defaultValue="300" $w={24} /></MathRow>
            </MathPins>
            <MathPins $right $mid><Data color={C.float} filled /></MathPins>
          </MathBox>
          <MathBox $x={1285} $y={234} $w={127}>
            <MathGlyph $size={40}>+</MathGlyph>
            <MathPins>
              <MathRow><Data color={C.float} filled /></MathRow>
              <MathRow><Data color={C.float} /><TextField aria-label="Addend" defaultValue="100" $w={24} /></MathRow>
            </MathPins>
            <MathPins $right>
              <MathRow><Data color={C.float} filled /></MathRow>
              <AddPinButton type="button" $push={6}>Add pin <Plus size={10} /></AddPinButton>
            </MathPins>
          </MathBox>
          <MathBox $x={3621} $y={378} $w={95}>
            <MathGlyph $size={36}>&lt;</MathGlyph>
            <MathPins>
              <MathRow><Data color={C.int} filled /></MathRow>
              <MathRow><Data color={C.int} /><TextField aria-label="Compare to" defaultValue="2" $w={21} /></MathRow>
            </MathPins>
            <MathPins $right $mid><Data color={C.bool} filled /></MathPins>
          </MathBox>

          {VARIABLES.map((v, i) => (
            <Variable key={i} {...v} />
          ))}

          <ArrayFnBox $x={3957} $y={363} $w={133} $h={44}>
            <ArrayFnLabel>
              <ArrayIcon size={34} gap={3} color="#8a5fb5" opacity={0.4} />
              <span>CLEAR</span>
            </ArrayFnLabel>
            <ArrayFnPins><Exec /><ArrayIcon /></ArrayFnPins>
            <ArrayFnPins $right><Exec /></ArrayFnPins>
          </ArrayFnBox>
          <ArrayFnBox $x={4819} $y={357} $w={135} $h={63}>
            <ArrayFnLabel>
              <ArrayIcon size={51} gap={3} color="#8a5fb5" opacity={0.4} />
              <span>ADD</span>
            </ArrayFnLabel>
            <ArrayFnPins><Exec /><ArrayIcon /><Data color={C.name} filled /></ArrayFnPins>
            <ArrayFnPins $right><Exec open /><Data color={C.int} /></ArrayFnPins>
          </ArrayFnBox>

          <Marker />

          <Variables $x={13} $y={602}>
            <VariablesHead>
              <span>Local Variables</span>
              <IconButton type="button" aria-label="Add variable"><Plus /></IconButton>
            </VariablesHead>
            <ul>
              <VariableItem><Bar $color="#f000c8" />BackpackStrId</VariableItem>
              <VariableItem><Bar $color="#0757cc" />BackpackLocation</VariableItem>
              <VariableItem><ArrayIcon size={11} />BackpackTiles</VariableItem>
              <VariableItem><Bar $color="#20c89c" />BackpackIdx</VariableItem>
            </ul>
          </Variables>

          <Watermark>BLUEPRINT</Watermark>
          <Vignette />

          <Toolbar>
            <NavButtons>
              <NavButton type="button" aria-label="Back"><ArrowGlyph /></NavButton>
              <NavButton type="button" aria-label="Forward"><ArrowGlyph flip /></NavButton>
            </NavButtons>
            <Breadcrumb>
              <CrumbIcon><Fx $size={22} $color="#b4c6f4">f</Fx></CrumbIcon>
              <Crumb href="#test">HotHudTest</Crumb>
              <svg width="7" height="12" aria-hidden="true">
                <path d="M1 1L6 6L1 11" fill="none" stroke="#fff" strokeWidth="1.500" />
              </svg>
              <Crumb href="#script">ConstructionScript</Crumb>
            </Breadcrumb>
            <ZoomLevel>Zoom 1:1</ZoomLevel>
          </Toolbar>
        </Canvas>
      </Frame>
    </Window>
  );
}
